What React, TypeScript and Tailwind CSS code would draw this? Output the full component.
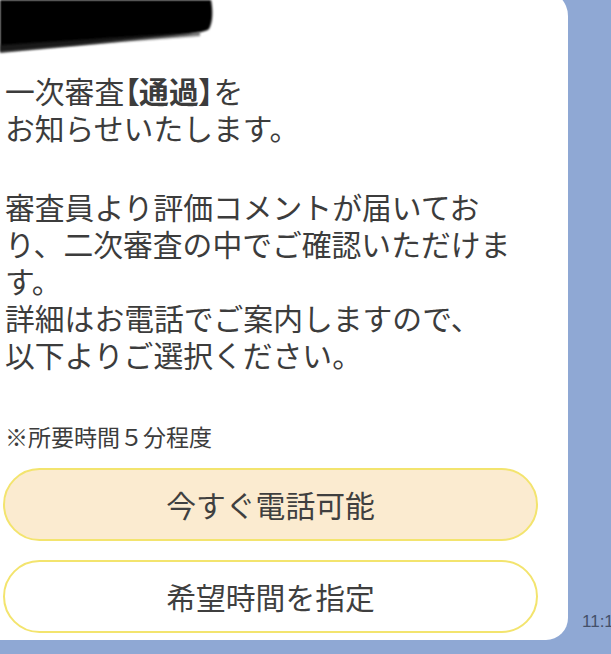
// LINE-style chat bubble: screening result notice with two reply buttons

const jp = "font-['Noto_Sans_CJK_JP','Noto_Sans',sans-serif]";

function Redaction() {
  // black marker scribble covering the sender name
  return (
    <svg
      className="absolute left-0 top-0"
      width="220"
      height="58"
      viewBox="0 0 220 58"
    >
      <defs>
        <filter id="blur" x="-10%" y="-10%" width="120%" height="130%">
          <feGaussianBlur stdDeviation="1.3" />
        </filter>
      </defs>
      <path
        d="M0 0 L211 0 C213 10 213 22 209 29 C205 33 180 35 150 38 C100 43 50 48 0 52 Z"
        fill="#000"
        filter="url(#blur)"
      />
      <path
        d="M0 45 C60 41 120 37 200 32 L200 36 C130 41 60 47 0 53 Z"
        fill="#2a2a2a"
        opacity="0.6"
        filter="url(#blur)"
      />
    </svg>
  );
}

function ReplyButton({ label, filled }: { label: string; filled?: boolean }) {
  return (
    <div
      className={`flex h-[73px] w-[535px] items-center justify-center rounded-full border-2 border-[#f3e46e] text-[29.8px] text-[#3f3f3f] ${
        filled ? "bg-[#fbebd0]" : "bg-white"
      }`}
    >
      {label}
    </div>
  );
}

export default function App() {
  return (
    <div
      className={`relative flex h-[654px] w-[611px] items-end overflow-hidden bg-[#8fa8d4] pb-[14px] ${jp}`}
    >
      <div className="-mt-[10px] flex h-[650px] w-[568px] shrink-0 flex-col rounded-tr-[26px] rounded-br-[22px] bg-white pl-[3px] pt-[82px]">
        <div className="pl-[2px] text-[29.8px] leading-[37px] text-[#3c3c3c]">
          <p>
            一次審査
            <span className="font-bold [font-feature-settings:'palt']">【通過】</span>を
          </p>
          <p>お知らせいたします。</p>
          <p className="mt-[42px]">
            審査員より評価コメントが届いてお
            <br />
            り、二次審査の中でご確認いただけま
            <br />
            す。
            <br />
            詳細はお電話でご案内しますので、
            <br />
            以下よりご選択ください。
          </p>
          <p className="mt-[49px] text-[23px] leading-[28px]">※所要時間５分程度</p>
        </div>
        <div className="mt-[18px] flex flex-col gap-[19px]">
          <ReplyButton label="今すぐ電話可能" filled />
          <ReplyButton label="希望時間を指定" />
        </div>
      </div>
      <span className="mb-[6px] ml-[14px] whitespace-nowrap font-['Liberation_Sans',sans-serif] text-[17px] text-[#44506a]">
        11:17
      </span>
      <Redaction />
    </div>
  );
}
